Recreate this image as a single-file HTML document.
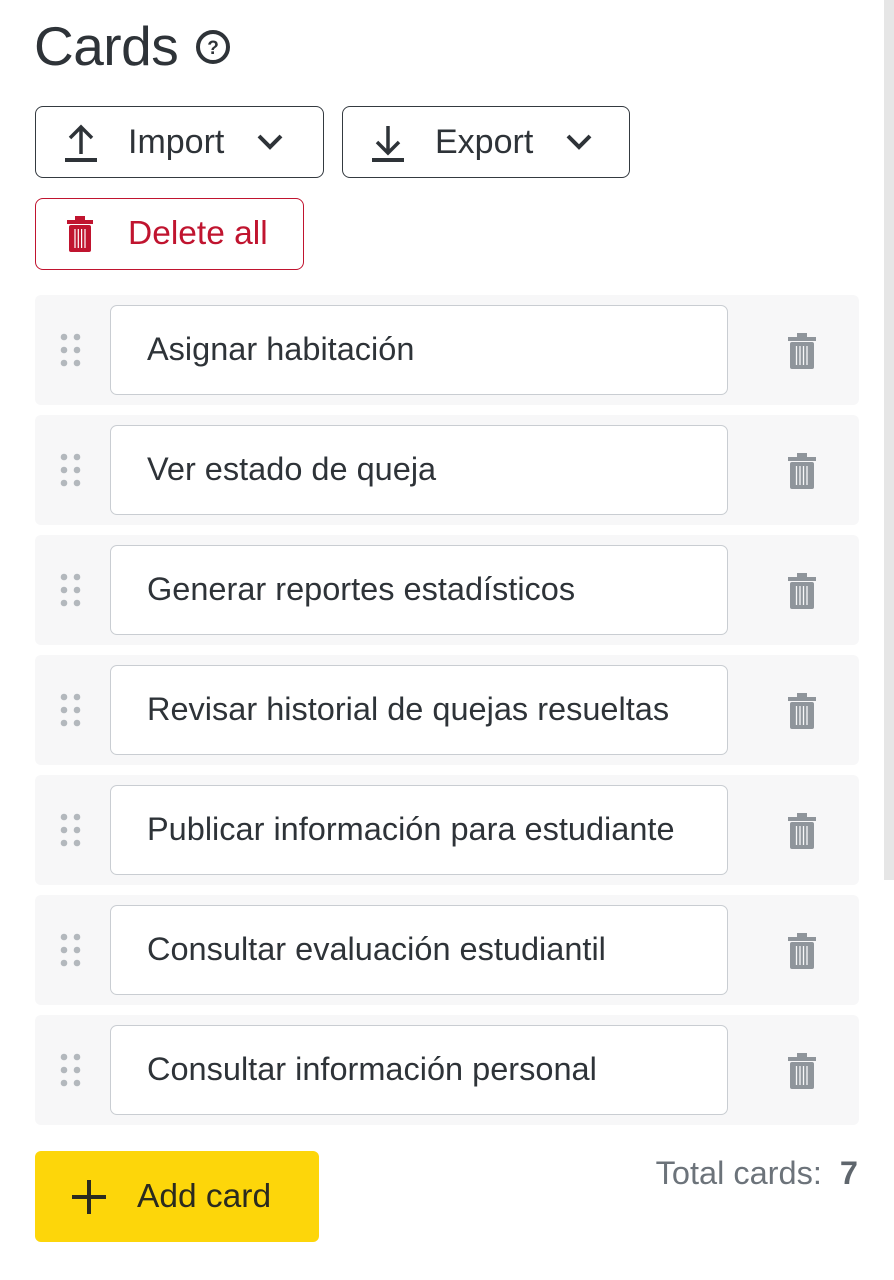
<!DOCTYPE html>
<html><head><style>
body{margin:0;width:894px;height:1280px;background:#fff;font-family:"Liberation Sans",sans-serif;color:#2e3338;position:relative;overflow:hidden}
.abs{position:absolute}
.title{left:34px;top:14px;font-size:55px;letter-spacing:-0.5px}
.btn{position:absolute;box-sizing:border-box;border:1.5px solid #343a40;border-radius:8px;height:72px;font-size:34px;display:flex;align-items:center}
.row{position:absolute;left:35px;width:824px;height:110px;background:#f7f7f8;border-radius:6px}
.inp{position:absolute;left:75px;top:10px;width:618px;height:90px;box-sizing:border-box;background:#fff;border:1.5px solid #c9cdd2;border-radius:7px;font-size:32.5px;line-height:87px;padding-left:36px;color:#2e3338;white-space:nowrap}
.dots{position:absolute;left:25px;top:38px}
.tr{position:absolute;left:752px;top:38px}
</style></head><body>
<div class="abs" style="left:884px;top:0;width:10px;height:880px;background:#e6e6e6"></div>
<div class="abs title">Cards</div>
<svg class="abs" style="left:194px;top:28px" width="38" height="38" viewBox="0 0 38 38"><circle cx="19" cy="19" r="15" fill="none" stroke="#2e3338" stroke-width="4"/><text x="19" y="26" font-size="19" font-weight="bold" text-anchor="middle" fill="#2e3338" font-family="Liberation Sans">?</text></svg>

<div class="btn" style="left:35px;top:106px;width:289px">
<svg style="margin-left:26px" width="38" height="40" viewBox="0 0 38 40"><path d="M19 32V6M8 16L19 5L30 16" fill="none" stroke="#2e3338" stroke-width="3.5"/><path d="M3 38H35" stroke="#2e3338" stroke-width="4"/></svg>
<span style="margin-left:28px">Import</span>
<svg style="margin-left:32px" width="28" height="18" viewBox="0 0 28 18"><path d="M3 3L14 14L25 3" fill="none" stroke="#2e3338" stroke-width="4"/></svg></div>

<div class="btn" style="left:342px;top:106px;width:288px">
<svg style="margin-left:26px" width="38" height="40" viewBox="0 0 38 40"><path d="M19 4V30M8 20L19 31L30 20" fill="none" stroke="#2e3338" stroke-width="3.5"/><path d="M3 38H35" stroke="#2e3338" stroke-width="4"/></svg>
<span style="margin-left:28px">Export</span>
<svg style="margin-left:32px" width="28" height="18" viewBox="0 0 28 18"><path d="M3 3L14 14L25 3" fill="none" stroke="#2e3338" stroke-width="4"/></svg></div>

<div class="btn" style="left:35px;top:198px;width:269px;border-color:#c0142f;color:#c0142f;font-size:33.5px">
<svg style="margin-left:30px" width="28" height="36" viewBox="0 0 28 36"><rect x="1" y="4" width="26" height="4" fill="#c0142f"/><rect x="9" y="0" width="10" height="5" fill="#c0142f"/><rect x="3" y="9" width="22" height="27" rx="2" fill="#c0142f"/><path d="M9 13V32M12.3 13V32M15.6 13V32M19 13V32" stroke="#fff" stroke-width="1.2"/></svg>
<span style="margin-left:34px">Delete all</span></div>

<div id="rows"></div>
<script>
var t=["Asignar habitación","Ver estado de queja","Generar reportes estadísticos","Revisar historial de quejas resueltas","Publicar información para estudiante","Consultar evaluación estudiantil","Consultar información personal"];
var h="";
for(var i=0;i<7;i++){h+='<div class="row" style="top:'+(295+120*i)+'px"><svg class="dots" width="22" height="34" viewBox="0 0 22 34"><g fill="#b3b8bd"><circle cx="4" cy="4" r="3.3"/><circle cx="17" cy="4" r="3.3"/><circle cx="4" cy="17" r="3.3"/><circle cx="17" cy="17" r="3.3"/><circle cx="4" cy="30" r="3.3"/><circle cx="17" cy="30" r="3.3"/></g></svg><div class="inp">'+t[i]+'</div><svg class="tr" width="30" height="36" viewBox="0 0 30 36"><rect x="1" y="4" width="28" height="4" fill="#8f959b"/><rect x="10" y="0" width="10" height="5" fill="#8f959b"/><rect x="3" y="9" width="24" height="27" rx="2" fill="#8f959b"/><path d="M9.5 13V32M13 13V32M16.5 13V32M20 13V32" stroke="#f7f7f8" stroke-width="1.3"/></svg></div>';}
document.getElementById("rows").innerHTML=h;
</script>

<div class="abs" style="left:35px;top:1151px;width:284px;height:91px;background:#fdd60a;border-radius:6px;display:flex;align-items:center;font-size:33.5px;color:#2b2b1f">
<svg style="margin-left:35px" width="38" height="38" viewBox="0 0 38 38"><path d="M19 2V36M2 19H36" stroke="#2b2b1f" stroke-width="4"/></svg>
<span style="margin-left:29px">Add card</span></div>
<div class="abs" style="right:36px;top:1155px;font-size:32.5px;color:#6c737a">Total cards:&nbsp; <b style="color:#5f666d">7</b></div>
</body></html>
